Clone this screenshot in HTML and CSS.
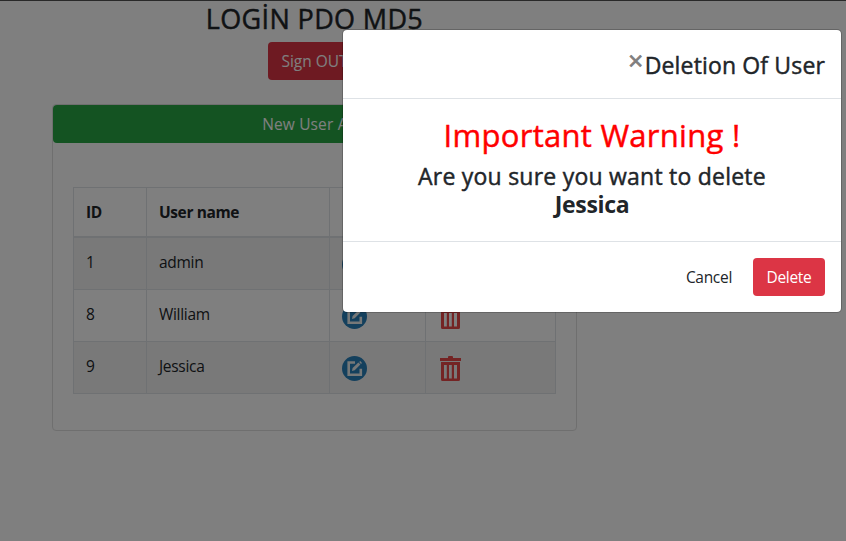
FILE: index.html
```html
<!DOCTYPE html>
<html lang="en">
<head>
<meta charset="utf-8">
<title>User administration</title>
<link rel="stylesheet" href="styles.css">
</head>
<body>
<svg class="sprite" aria-hidden="true">
  <symbol id="edit" viewBox="0 0 25 25">
    <circle cx="12.5" cy="12.5" r="12.5" fill="#2980ba"/>
    <path d="M13 6.5H6.700v12.200h12.100v-5.900" fill="none" stroke="#ecf0f1" stroke-width="2.600"/>
    <path d="M10 15l.6-3 5.800-5.400 2 2-5.700 5.700zM17.200 5.900l1-.8 1.800 2-1 .9z" fill="#ecf0f1"/>
  </symbol>
  <symbol id="trash" viewBox="0 0 21 25">
    <path fill-rule="evenodd" fill="#e84849" d="M8 2V1q0-1 1-1h3q1 0 1 1v1h8v3H0V2zM1 6h19v17.500q0 1.500-1.500 1.500h-16Q1 25 1 23.500zM4 9v13.500h2.800V9zM9 9v13.500h2.800V9zM14 9v13.500h3V9z"/>
  </symbol>
</svg>

<main class="page">
  <h3 class="title">LOGİN PDO MD5</h3>
  <a class="btn btn-danger signout">Sign OUT</a>
  <section class="card">
    <a class="btn btn-success">New User Add</a>
    <table class="users">
      <colgroup><col class="col-id"><col class="col-name"><col class="col-edit"><col class="col-delete"></colgroup>
      <thead>
        <tr><th>ID</th><th>User name</th><th></th><th></th></tr>
      </thead>
      <tbody>
        <tr><td>1</td><td>admin</td><td><svg class="edit"><use href="#edit"/></svg></td><td><svg class="trash"><use href="#trash"/></svg></td></tr>
        <tr><td>8</td><td>William</td><td><svg class="edit"><use href="#edit"/></svg></td><td><svg class="trash"><use href="#trash"/></svg></td></tr>
        <tr><td>9</td><td>Jessica</td><td><svg class="edit"><use href="#edit"/></svg></td><td><svg class="trash"><use href="#trash"/></svg></td></tr>
      </tbody>
    </table>
  </section>
</main>

<div class="overlay">
  <div class="modal">
    <header class="modal-header">
      <span class="close">×</span>
      <h4 class="modal-title">Deletion Of User</h4>
    </header>
    <div class="modal-body">
      <h2 class="warning">Important Warning !</h2>
      <h4 class="question">Are you sure you want to delete<br><b>Jessica</b></h4>
    </div>
    <footer class="modal-footer">
      <a class="btn cancel">Cancel</a>
      <a class="btn btn-danger delete">Delete</a>
    </footer>
  </div>
</div>
</body>
</html>
```
FILE: styles.css
```css
* { box-sizing: border-box; }

body {
  margin: 0;
  height: 541px;
  overflow: hidden;
  background: #fff;
  color: #212529;
  font: 15.5px/24px "Open Sans", "Noto Sans", sans-serif;
  letter-spacing: -0.3px;
}

h2, h3, h4 {
  margin: 0;
  font-weight: 400;
  white-space: nowrap;
  -webkit-text-stroke: 0.45px currentColor;
}

.sprite { position: absolute; width: 0; height: 0; }

.page {
  display: flex;
  flex-direction: column;
  align-items: center;
  width: 525px;
  height: 541px;
  margin-left: 52px;
  border-top: 1px solid transparent;
}

.title {
  height: 41px;
  font-size: 27px;
  line-height: 36px;
  letter-spacing: 0.35px;
}

.btn {
  display: block;
  height: 38px;
  padding: 7px 13px;
  border-radius: 4px;
  text-align: center;
  white-space: nowrap;
}
.btn-danger { background: #dc3545; color: #fff; }
.btn-success { background: #28a745; color: #fff; letter-spacing: 0.15px; }
.signout { width: 93px; letter-spacing: -0.05px; }

.card {
  width: 525px;
  height: 327px;
  margin-top: 24px;
  border: 1px solid #dfdfdf;
  border-radius: 4px;
}

.users {
  width: 483px;
  margin: 44px 0 0 20px;
  border-collapse: collapse;
  table-layout: fixed;
}
.col-id { width: 73px; }
.col-name { width: 183px; }
.col-edit { width: 96px; }
.col-delete { width: 130px; }
.users th, .users td {
  height: 52px;
  padding: 0 12px 3px;
  border: 1px solid #dee2e6;
  text-align: left;
  vertical-align: middle;
}
.users th {
  height: 49px;
  padding-bottom: 0;
  border-bottom-width: 2px;
  font-weight: 700;
  letter-spacing: -0.4px;
}
.users tbody tr:first-child td { height: 53px; }
.users tbody tr:nth-child(odd) { background: #f2f2f2; }
.users svg { display: block; height: 25px; margin-top: 5px; }
.edit { width: 25px; }
.trash { width: 21px; margin-left: 2px; }

.overlay {
  position: absolute;
  inset: 0;
  padding: 29px 4px 0 342px;
  border-top: 1px solid #292929;
  background: rgba(0, 0, 0, .5);
}
.modal {
  width: 500px;
  height: 284px;
  margin-top: -1px;
  border: 1px solid rgba(0, 0, 0, .2);
  border-radius: 5px;
  background: #fff;
  background-clip: padding-box;
}
.modal-header {
  display: flex;
  justify-content: flex-end;
  height: 69px;
  padding: 16px;
  border-bottom: 1px solid #dee2e6;
}
.close {
  margin-right: 2px;
  color: #7f7f7f;
  font-size: 26px;
  font-weight: 400;
  line-height: 28px;
  -webkit-text-stroke: 0.8px currentColor;
}
.modal-title { font-size: 23px; line-height: 38px; letter-spacing: 0.15px; }
.modal-body {
  height: 143px;
  padding: 16px;
  border-bottom: 1px solid #dee2e6;
  text-align: center;
}
.warning {
  height: 47px;
  color: #f00;
  font-size: 31px;
  line-height: 41px;
  letter-spacing: 0.28px;
}
.question { font-size: 23px; line-height: 28px; letter-spacing: 0.23px; }
.question b { letter-spacing: -0.3px; -webkit-text-stroke: 0; }
.modal-footer {
  display: flex;
  justify-content: flex-end;
  gap: 8px;
  padding: 16px;
}
.delete { width: 72px; }
```
